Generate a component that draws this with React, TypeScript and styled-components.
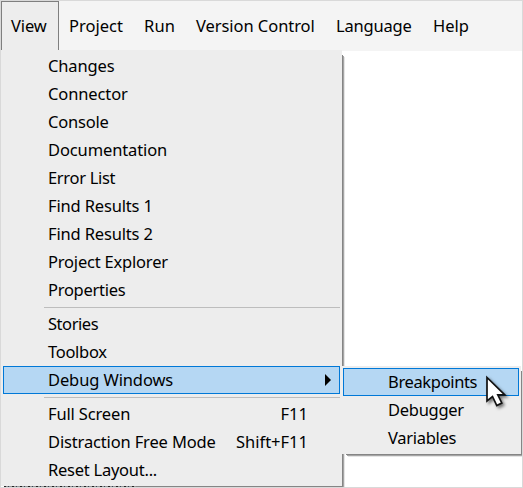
import React from 'react';
import styled, { createGlobalStyle } from 'styled-components';

const GlobalStyle = createGlobalStyle`
  * { box-sizing: border-box; }
  body { margin: 0; background: #fff; }
`;

const Frame = styled.div`
  position: relative;
  display: flex;
  flex-direction: column;
  width: 523px;
  height: 488px;
  overflow: hidden;
  border: 1px solid #d9d9d9;
  background: #fff;
  color: #000;
  font: 16.5px/28px 'Noto Sans', 'Open Sans', sans-serif;
  white-space: nowrap;
`;

const MenuBar = styled.nav`
  display: flex;
  flex: none;
  height: 50px;
  background: #f4f4f4;
`;

const MenuTab = styled.div<{ $width: number; $spacing?: number; $open?: boolean }>`
  width: ${p => p.$width}px;
  height: 49px;
  padding: ${p => (p.$open ? '10px 0 0 9px' : '11px 0 0 10px')};
  letter-spacing: ${p => p.$spacing ?? 0}px;
  background: ${p => (p.$open ? '#ededed' : 'transparent')};
  border: solid #7f7f7f;
  border-width: ${p => (p.$open ? '1px 1px 0' : '0')};
`;

const Panel = styled.div`
  display: flex;
  flex-direction: column;
  flex: none;
  padding: 2px 2px 0;
  background: #ededed;
  box-shadow: 3px 3px 0 -2px #858585, 4px 4px 0 -2px #a5a5a5, 5px 5px 0 -2px #e5e5e5;
`;

const ViewMenu = styled(Panel)`
  width: 341px;
  height: 436px;
  margin-top: -1px;
`;

const SubMenu = styled(Panel)`
  position: absolute;
  left: calc(100% + 1px);
  top: 0;
  width: 180px;
  height: 88px;
`;

/* Tops of the text line in the pane underneath, just showing below the menu. */
const HiddenLine = styled.div`
  flex: none;
  width: 132px;
  height: 1px;
  margin-left: 3px;
  background: repeating-linear-gradient(90deg, #222 0 2px, #999 2px 4px, #345 4px 5px, #999 5px 8px);
`;

const Row = styled.div<{ $active?: boolean }>`
  position: relative;
  display: flex;
  align-items: center;
  justify-content: space-between;
  height: 28px;
  padding: 0 ${p => (p.$active ? 9 : 32)}px 0 45px;
  background: ${p => (p.$active ? '#b5d7f3' : 'transparent')};
  box-shadow: ${p => (p.$active ? 'inset 0 0 0 1px #0078d7' : 'none')};
`;

const Label = styled.span<{ $spacing?: number }>`
  letter-spacing: ${p => p.$spacing ?? 0}px;
`;

const Divider = styled.div`
  height: 6px;
  margin-left: 41px;
  background: linear-gradient(#bdbdbd, #bdbdbd) 0 3px / 100% 1px no-repeat;
`;

const Pointer = styled.svg`
  position: absolute;
  left: 480px;
  top: 370px;
  filter: drop-shadow(2px 2px 1.5px rgba(0, 0, 0, 0.5));
`;

type Entry = {
  text: string;
  spacing?: number;
  keys?: string;
  active?: boolean;
  children?: Entry[];
};

const tabs = [
  { text: 'View', width: 58, spacing: -0.1, open: true },
  { text: 'Project', width: 75 },
  { text: 'Run', width: 52, spacing: 0.15 },
  { text: 'Version Control', width: 140, spacing: -0.06 },
  { text: 'Language', width: 97, spacing: -0.18 },
  { text: 'Help', width: 60 },
];

const debugWindows: Entry[] = [
  { text: 'Breakpoints', spacing: -0.35, active: true },
  { text: 'Debugger', spacing: -0.28 },
  { text: 'Variables', spacing: -0.3 },
];

const groups: Entry[][] = [
  [
    { text: 'Changes', spacing: -0.15 },
    { text: 'Connector', spacing: -0.12 },
    { text: 'Console', spacing: -0.2 },
    { text: 'Documentation', spacing: -0.12 },
    { text: 'Error List', spacing: -0.32 },
    { text: 'Find Results 1', spacing: -0.16 },
    { text: 'Find Results 2', spacing: -0.16 },
    { text: 'Project Explorer', spacing: -0.2 },
    { text: 'Properties', spacing: -0.28 },
  ],
  [
    { text: 'Stories', spacing: -0.45 },
    { text: 'Toolbox', spacing: -0.3 },
    { text: 'Debug Windows', spacing: -0.12, active: true, children: debugWindows },
  ],
  [
    { text: 'Full Screen', spacing: -0.15, keys: 'F11' },
    { text: 'Distraction Free Mode', spacing: -0.15, keys: 'Shift+F11' },
    { text: 'Reset Layout...', spacing: -0.25 },
  ],
];

function MenuItem({ entry }: { entry: Entry }) {
  return (
    <Row $active={entry.active}>
      <Label $spacing={entry.spacing}>{entry.text}</Label>
      {entry.keys && <Label>{entry.keys}</Label>}
      {entry.children && (
        <>
          <svg width="6" height="12" viewBox="0 0 6 12">
            <path d="M0 0 6 6 0 12Z" />
          </svg>
          <SubMenu>
            {entry.children.map(child => (
              <MenuItem key={child.text} entry={child} />
            ))}
          </SubMenu>
        </>
      )}
    </Row>
  );
}

export default function App() {
  return (
    <>
      <GlobalStyle />
      <Frame>
        <MenuBar>
          {tabs.map(t => (
            <MenuTab key={t.text} $width={t.width} $spacing={t.spacing} $open={t.open}>
              {t.text}
            </MenuTab>
          ))}
        </MenuBar>
        <ViewMenu>
          {groups.map((group, i) => (
            <React.Fragment key={i}>
              {i > 0 && <Divider />}
              {group.map(e => (
                <MenuItem key={e.text} entry={e} />
              ))}
            </React.Fragment>
          ))}
        </ViewMenu>
        <HiddenLine />
        <Pointer width="32" height="40" viewBox="0 0 32 40">
          <path
            d="M6 6.5V30L11.5 25.5 15.8 34.5 20.8 32 16.8 23.8H23.8Z"
            fill="#fff"
            stroke="#111"
            strokeWidth="1.7"
          />
        </Pointer>
      </Frame>
    </>
  );
}
